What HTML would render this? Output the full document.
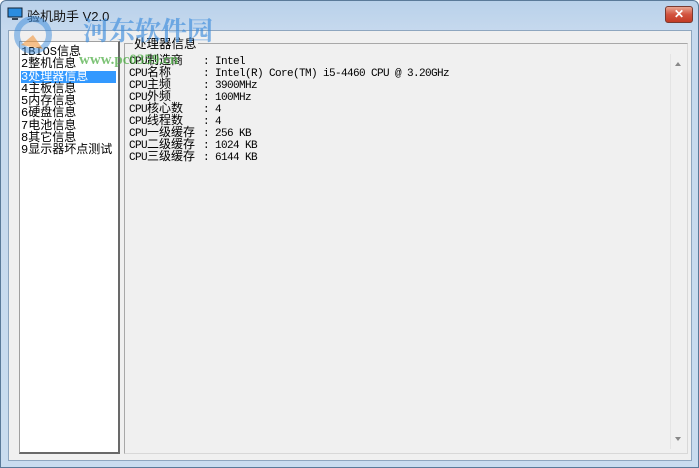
<!DOCTYPE html>
<html><head><meta charset="utf-8"><style>
*{margin:0;padding:0;box-sizing:border-box}
body{width:699px;height:468px;overflow:hidden;background:#fff;font-family:"Liberation Sans","Noto Sans CJK SC",sans-serif}
.win{position:absolute;left:0;top:0;width:699px;height:468px;background:linear-gradient(#b9d1ea,#c6d9ee 30px,#c9dcef);border:1px solid #5a7a99;border-radius:6px 6px 0 0}
.title{position:absolute;left:26px;top:5px;font-size:13px;color:#111}
.close{position:absolute;left:664px;top:5px;width:28px;height:17px;border:1px solid #7a3a30;border-radius:3px;background:linear-gradient(#e8a592,#d2533f 50%,#c33b25);color:#fff;font-size:12px;font-weight:bold;text-align:center;line-height:15px}
.client{position:absolute;left:7px;top:29px;width:684px;height:431px;background:#f0f0f0;border:1px solid #8ea6bf}
.list{position:absolute;left:10px;top:10px;width:101px;height:413px;background:#fff;border:1px solid #a0a0a0;border-right:2px solid #696969;border-bottom:2px solid #696969;padding:4px 1px}
.list div{height:12.25px;line-height:12.25px;font-size:12px;color:#000;white-space:nowrap;font-family:"Liberation Mono","Noto Sans CJK SC",monospace}
.list .sel{background:#3399ff;color:#fff;width:95px}
.panel{position:absolute;left:115px;top:12px;width:564px;height:411px;border:1px solid #a8a8a8;border-right-color:#d8d8d8;border-bottom-color:#d8d8d8}
.cap{position:absolute;left:8px;top:-7px;background:#f0f0f0;font-size:12.5px;padding:0 1px;line-height:14px}
.txt{position:absolute;left:4px;top:10px;color:#000}
.txt div{height:12px;line-height:12px;white-space:nowrap;font-size:11px;letter-spacing:-0.6px;font-family:"Liberation Mono",monospace}
.txt b{font-weight:normal;display:inline-block;width:74px}
.txt i{font-style:normal;font-size:12px;font-family:"Noto Sans CJK SC",sans-serif;letter-spacing:0}
.sb{position:absolute;left:545px;top:10px;width:15px;height:395px;background:#f0f0f0;border-left:1px solid #e4e4e4}
.wm{position:absolute;left:82px;top:10px;font-size:26px;font-weight:bold;color:rgba(60,140,220,.65);font-family:"Noto Serif CJK SC",serif}
.wm2{position:absolute;left:78px;top:51px;font-size:15px;font-weight:bold;color:rgba(70,170,60,.7);font-family:"Liberation Serif",serif}
</style></head><body>
<div class="win">
<svg style="position:absolute;left:6px;top:6px" width="16" height="14"><rect x="1" y="1" width="14" height="9" fill="#2a8de0" stroke="#123" /><rect x="5" y="11" width="6" height="2" fill="#345"/></svg>
<div class="title">验机助手 V2.0</div>
<div class="close">✕</div>
<div class="client">
<div class="list">
<div>1BIOS信息</div><div>2整机信息</div><div class="sel">3处理器信息</div><div>4主板信息</div><div>5内存信息</div><div>6硬盘信息</div><div>7电池信息</div><div>8其它信息</div><div>9显示器坏点测试</div>
</div>
<div class="panel">
<div class="cap">处理器信息</div>
<div class="txt">
<div><b>CPU<i>制造商</i></b>: Intel</div>
<div><b>CPU<i>名称</i></b>: Intel(R) Core(TM) i5-4460 CPU @ 3.20GHz</div>
<div><b>CPU<i>主频</i></b>: 3900MHz</div>
<div><b>CPU<i>外频</i></b>: 100MHz</div>
<div><b>CPU<i>核心数</i></b>: 4</div>
<div><b>CPU<i>线程数</i></b>: 4</div>
<div><b>CPU<i>一级缓存</i></b>: 256 KB</div>
<div><b>CPU<i>二级缓存</i></b>: 1024 KB</div>
<div><b>CPU<i>三级缓存</i></b>: 6144 KB</div>
</div>
<div class="sb"><div style="position:absolute;left:4px;top:5px;width:0;height:0;border:3px solid transparent;border-bottom:4px solid #888"></div><div style="position:absolute;left:4px;top:383px;width:0;height:0;border:3px solid transparent;border-top:4px solid #888"></div></div>
</div>
</div>
<svg style="position:absolute;left:12px;top:14px" width="40" height="40"><circle cx="20" cy="20" r="16" fill="none" stroke="rgba(60,140,220,.5)" stroke-width="6"/><path d="M8 30 L20 20 L30 34 Z" fill="rgba(240,150,60,.6)"/></svg>
<div class="wm">河东软件园</div>
<div class="wm2">www.pc0359.cn</div>
</div>
</body></html>
